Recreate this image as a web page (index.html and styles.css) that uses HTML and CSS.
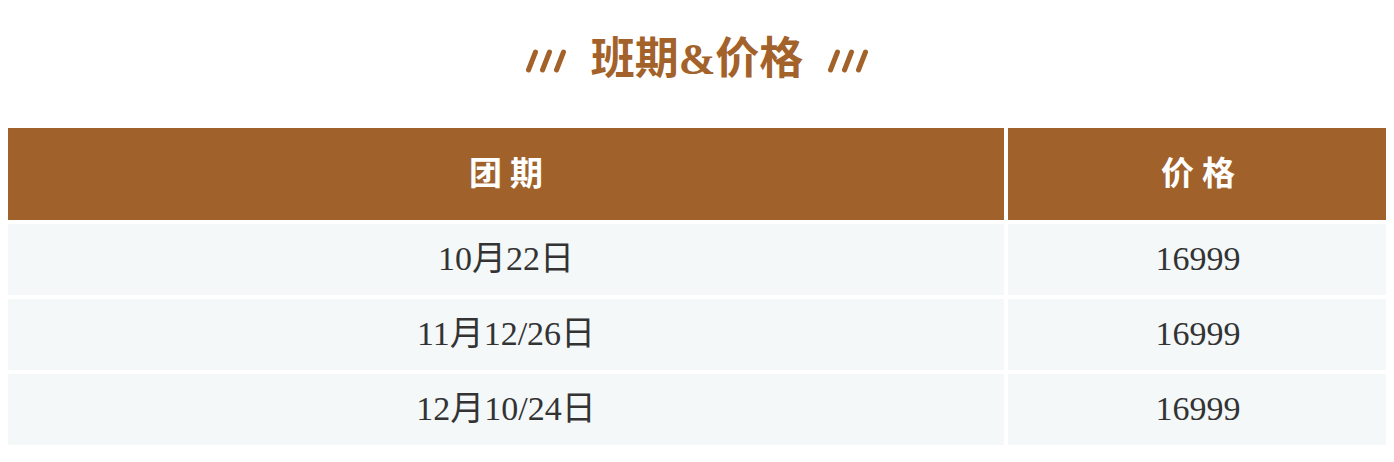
FILE: index.html
```html
<!DOCTYPE html>
<html lang="zh-CN">
<head>
<meta charset="utf-8">
<title>班期&amp;价格</title>
<link rel="stylesheet" href="styles.css">
</head>
<body>
<div class="title">
  <svg class="slashes" width="42" height="24" viewBox="0 0 42 24"><path d="M3.5 21L10.5 3M17.5 21L24.5 3M31.5 21L38.5 3" stroke="#a3622a" stroke-width="5" stroke-linecap="round" fill="none"/></svg>
  <h1 class="title-text">班期&amp;价格</h1>
  <svg class="slashes" width="42" height="24" viewBox="0 0 42 24"><path d="M3.5 21L10.5 3M17.5 21L24.5 3M31.5 21L38.5 3" stroke="#a3622a" stroke-width="5" stroke-linecap="round" fill="none"/></svg>
</div>
<div class="table">
  <div class="th">团期</div>
  <div class="th">价格</div>
  <div class="td">10月22日</div>
  <div class="td">16999</div>
  <div class="td">11月12/26日</div>
  <div class="td">16999</div>
  <div class="td">12月10/24日</div>
  <div class="td">16999</div>
</div>
</body>
</html>
```
FILE: styles.css
```css
body {
  margin: 8px;
  background: #ffffff;
  font-family: "Liberation Serif", "Noto Sans CJK SC", serif;
}
.title {
  height: 120px;
  padding-bottom: 16px;
  box-sizing: border-box;
  display: flex;
  align-items: center;
  justify-content: center;
  gap: 24px;
}
.slashes {
  display: block;
  margin-top: 1px;
}
.title-text {
  margin: 0;
  font-size: 44px;
  font-weight: bold;
  color: #a3622a;
  line-height: 1;
}
.table {
  display: grid;
  grid-template-columns: 996px 380px;
  grid-template-rows: 92px 71px 71px 71px;
  gap: 4px;
}
.th {
  background: #a1612a;
  color: #ffffff;
  font-family: "Noto Sans CJK SC", sans-serif;
  font-weight: bold;
  font-size: 33px;
  line-height: 1;
  letter-spacing: 8px;
  padding-left: 8px;
  padding-bottom: 6px;
  display: flex;
  align-items: center;
  justify-content: center;
}
.td {
  background: #f4f8f9;
  color: #333333;
  font-size: 34px;
  line-height: 1;
  padding-bottom: 1px;
  display: flex;
  align-items: center;
  justify-content: center;
}
```
